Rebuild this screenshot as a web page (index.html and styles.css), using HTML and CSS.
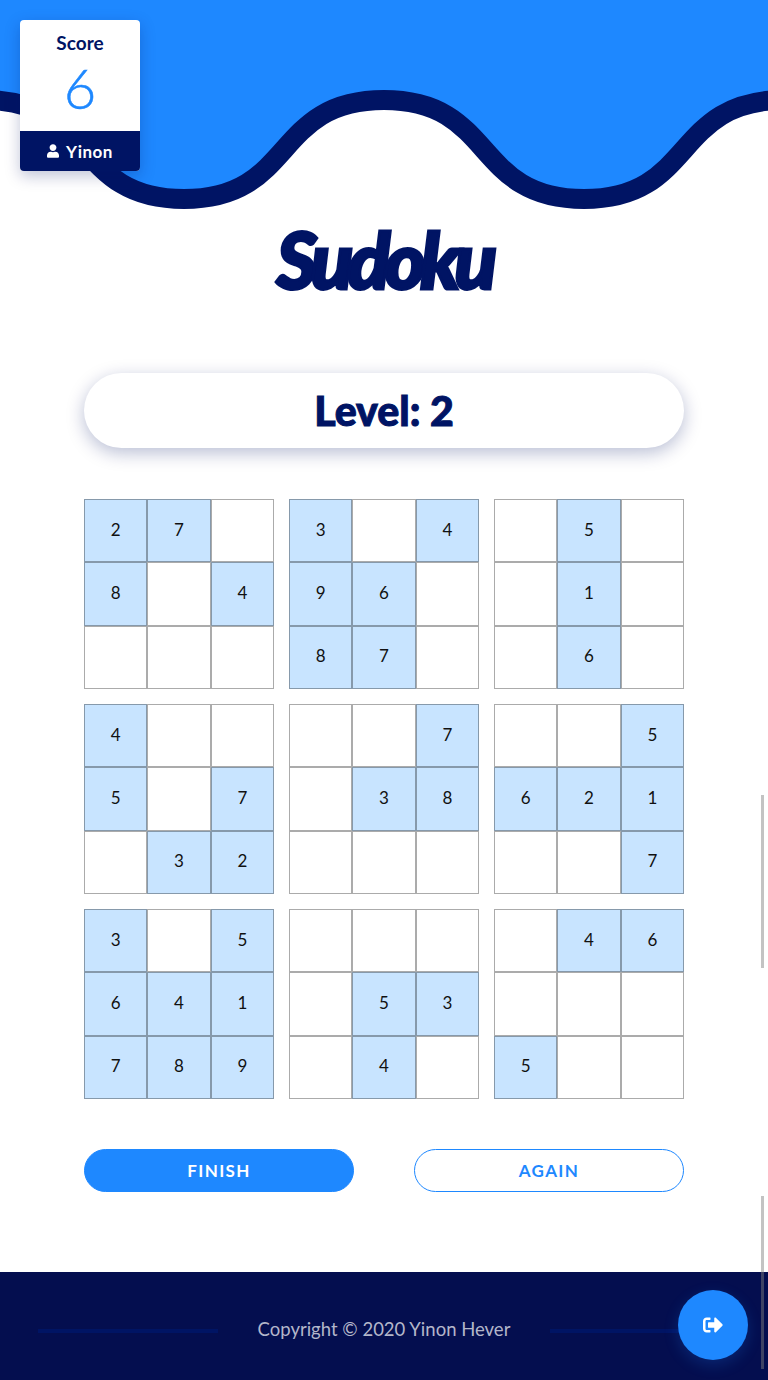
FILE: index.html
```html
<!DOCTYPE html>
<html lang="en">
<head>
  <meta charset="UTF-8" />
  <meta name="viewport" content="width=device-width,initial-scale=1.0"/>
  <title>Sudoku</title>
  <link rel="stylesheet" href="styles.css">
</head>
<body>
  <!-- Score card -->
  <div class="score-card">
    <div class="score-top">
      <div class="score-label">Score</div>
      <div class="score-value">6</div>
    </div>
    <div class="score-user">
      <svg class="user-icon" viewBox="0 0 448 512"><path fill="currentColor" d="M224 256c70.7 0 128-57.3 128-128S294.7 0 224 0 96 57.3 96 128s57.3 128 128 128zm89.6 32h-16.7c-22.2 10.2-46.9 16-72.9 16s-50.6-5.8-72.9-16h-16.7C60.2 288 0 348.2 0 422.4V464c0 26.5 21.5 48 48 48h352c26.5 0 48-21.5 48-48v-41.6c0-74.2-60.2-134.4-134.4-134.4z"/></svg>
      <span>Yinon</span>
    </div>
  </div>

  <!-- Wave header -->
  <svg class="wave" viewBox="0 0 768 210" width="768" height="210">
    <path fill="#1e88ff" stroke="#001464" stroke-width="20" d="M-216 199 C-104 199 -128 100 -16 100 C96 100 72 199 184 199 C296 199 272 100 384 100 C496 100 472 199 584 199 C696 199 672 100 784 100 L800 -20 L-216 -20 Z"/>
  </svg>

  <main class="content">
    <h1 class="title">Sudoku</h1>
    <div class="level">Level: 2</div>

    <div class="board">
      <div class="block">
        <div class="cell given">2</div><div class="cell given">7</div><div class="cell"></div>
        <div class="cell given">8</div><div class="cell"></div><div class="cell given">4</div>
        <div class="cell"></div><div class="cell"></div><div class="cell"></div>
      </div>
      <div class="block">
        <div class="cell given">3</div><div class="cell"></div><div class="cell given">4</div>
        <div class="cell given">9</div><div class="cell given">6</div><div class="cell"></div>
        <div class="cell given">8</div><div class="cell given">7</div><div class="cell"></div>
      </div>
      <div class="block">
        <div class="cell"></div><div class="cell given">5</div><div class="cell"></div>
        <div class="cell"></div><div class="cell given">1</div><div class="cell"></div>
        <div class="cell"></div><div class="cell given">6</div><div class="cell"></div>
      </div>
      <div class="block">
        <div class="cell given">4</div><div class="cell"></div><div class="cell"></div>
        <div class="cell given">5</div><div class="cell"></div><div class="cell given">7</div>
        <div class="cell"></div><div class="cell given">3</div><div class="cell given">2</div>
      </div>
      <div class="block">
        <div class="cell"></div><div class="cell"></div><div class="cell given">7</div>
        <div class="cell"></div><div class="cell given">3</div><div class="cell given">8</div>
        <div class="cell"></div><div class="cell"></div><div class="cell"></div>
      </div>
      <div class="block">
        <div class="cell"></div><div class="cell"></div><div class="cell given">5</div>
        <div class="cell given">6</div><div class="cell given">2</div><div class="cell given">1</div>
        <div class="cell"></div><div class="cell"></div><div class="cell given">7</div>
      </div>
      <div class="block">
        <div class="cell given">3</div><div class="cell"></div><div class="cell given">5</div>
        <div class="cell given">6</div><div class="cell given">4</div><div class="cell given">1</div>
        <div class="cell given">7</div><div class="cell given">8</div><div class="cell given">9</div>
      </div>
      <div class="block">
        <div class="cell"></div><div class="cell"></div><div class="cell"></div>
        <div class="cell"></div><div class="cell given">5</div><div class="cell given">3</div>
        <div class="cell"></div><div class="cell given">4</div><div class="cell"></div>
      </div>
      <div class="block">
        <div class="cell"></div><div class="cell given">4</div><div class="cell given">6</div>
        <div class="cell"></div><div class="cell"></div><div class="cell"></div>
        <div class="cell given">5</div><div class="cell"></div><div class="cell"></div>
      </div>
    </div>

    <div class="actions">
      <button class="btn btn-solid">FINISH</button>
      <button class="btn btn-outline">AGAIN</button>
    </div>
  </main>

  <footer class="footer">
    <span class="footer-line"></span>
    <span class="copyright">Copyright © 2020 Yinon Hever</span>
    <span class="footer-line"></span>
  </footer>

  <!-- Logout button -->
  <button class="logout">
    <svg viewBox="0 0 512 512"><path fill="currentColor" d="M497 273L329 441c-15 15-41 4.5-41-17v-96H152c-13.3 0-24-10.7-24-24v-96c0-13.3 10.7-24 24-24h136V88c0-21.4 25.9-32 41-17l168 168c9.3 9.4 9.3 24.6 0 34zM192 436v-40c0-6.6-5.4-12-12-12H96c-17.7 0-32-14.3-32-32V160c0-17.7 14.3-32 32-32h84c6.6 0 12-5.4 12-12V76c0-6.6-5.4-12-12-12H96c-53 0-96 43-96 96v192c0 53 43 96 96 96h84c6.6 0 12-5.4 12-12z"/></svg>
  </button>

  <!-- Scroll marks along the right edge -->
  <span class="scroll-mark mark-one"></span>
  <span class="scroll-mark mark-two"></span>
</body>
</html>
```

FILE: styles.css
```css
/* ---------- Global Styles ---------- */
* {
  box-sizing: border-box;
}
body {
  position: relative;
  width: 768px;
  height: 1380px;
  margin: 0;
  overflow: hidden;
  background: #fff;
  color: #001464;
  font-family: Lato, "Open Sans", sans-serif;
  display: flex;
  flex-direction: column;
}

/* ---------- Header ---------- */
.wave {
  display: block;
  flex: none;
}

.score-card {
  position: absolute;
  top: 20px;
  left: 20px;
  width: 120px;
  height: 151px;
  border-radius: 4px;
  overflow: hidden;
  background: #fff;
  box-shadow: 0 5px 15px rgba(0, 20, 100, 0.25);
  display: flex;
  flex-direction: column;
}
.score-top {
  flex: 1;
  text-align: center;
}
.score-label {
  margin-top: 13px;
  font-size: 19px;
  font-weight: 700;
  line-height: 20px;
}
.score-value {
  margin-top: 5px;
  color: #1e88ff;
  font-size: 56px;
  font-weight: 300;
  line-height: 60px;
  -webkit-text-stroke: 0.5px #1e88ff;
}
.score-user {
  height: 40px;
  background: #001464;
  color: #fff;
  font-size: 17px;
  font-weight: 700;
  letter-spacing: 0.5px;
  display: flex;
  align-items: center;
  justify-content: center;
  gap: 7px;
}
.user-icon {
  width: 12px;
  height: 14px;
}

/* ---------- Main ---------- */
.content {
  flex: 1;
  padding: 0 84px;
  display: flex;
  flex-direction: column;
}
.title {
  margin: 4px 0 0;
  height: 159px;
  text-align: center;
  font-size: 78px;
  font-weight: 900;
  font-style: italic;
  letter-spacing: -5.5px;
  line-height: 90px;
  -webkit-text-stroke: 3px #001464;
}
.level {
  height: 75px;
  border-radius: 38px;
  background: #fff;
  box-shadow: 0 5px 18px rgba(0, 20, 100, 0.28);
  font-size: 41px;
  font-weight: 900;
  line-height: 75px;
  text-align: center;
  -webkit-text-stroke: 1px #001464;
}

/* ---------- Board ---------- */
.board {
  margin-top: 51px;
  display: grid;
  grid-template-columns: repeat(3, 190px);
  gap: 15px;
}
.block {
  display: grid;
  grid-template-columns: repeat(3, 1fr);
  grid-template-rows: repeat(3, 1fr);
  height: 190px;
}
.cell {
  border: 1px solid rgba(0, 0, 0, 0.33);
  padding-bottom: 3px;
  font-size: 17px;
  color: #111;
  display: flex;
  align-items: center;
  justify-content: center;
}
.given {
  background: #c8e4ff;
}

/* ---------- Buttons ---------- */
.actions {
  margin-top: 50px;
  display: flex;
  justify-content: space-between;
}
.btn {
  width: 270px;
  height: 43px;
  border-radius: 22px;
  font-family: inherit;
  font-size: 17px;
  font-weight: 700;
  letter-spacing: 1.4px;
}
.btn-solid {
  background: #1e88ff;
  border: 1px solid #1e88ff;
  color: #fff;
}
.btn-outline {
  background: #fff;
  border: 1px solid #1e88ff;
  color: #1e88ff;
}

/* ---------- Footer ---------- */
.footer {
  height: 108px;
  flex: none;
  background: #040e4f;
  padding: 0 38px;
  display: flex;
  align-items: center;
  justify-content: space-between;
}
.footer-line {
  width: 180px;
  height: 4px;
  margin-top: 10px;
  background: #001464;
}
.copyright {
  margin-top: 6px;
  color: #b3b6ca;
  font-size: 18.5px;
}

/* ---------- Floating bits ---------- */
.logout {
  position: absolute;
  left: 678px;
  top: 1290px;
  width: 70px;
  height: 70px;
  border: none;
  border-radius: 50%;
  padding: 0;
  background: #1e88ff;
  color: #fff;
  box-shadow: 0 5px 15px rgba(30, 136, 255, 0.2);
  display: flex;
  align-items: center;
  justify-content: center;
}
.logout svg {
  width: 20px;
  height: 20px;
}
.scroll-mark {
  position: absolute;
  left: 761px;
  width: 3px;
  height: 173px;
  background: rgba(128, 128, 128, 0.47);
}
.mark-one {
  top: 795px;
}
.mark-two {
  top: 1196px;
}
```
